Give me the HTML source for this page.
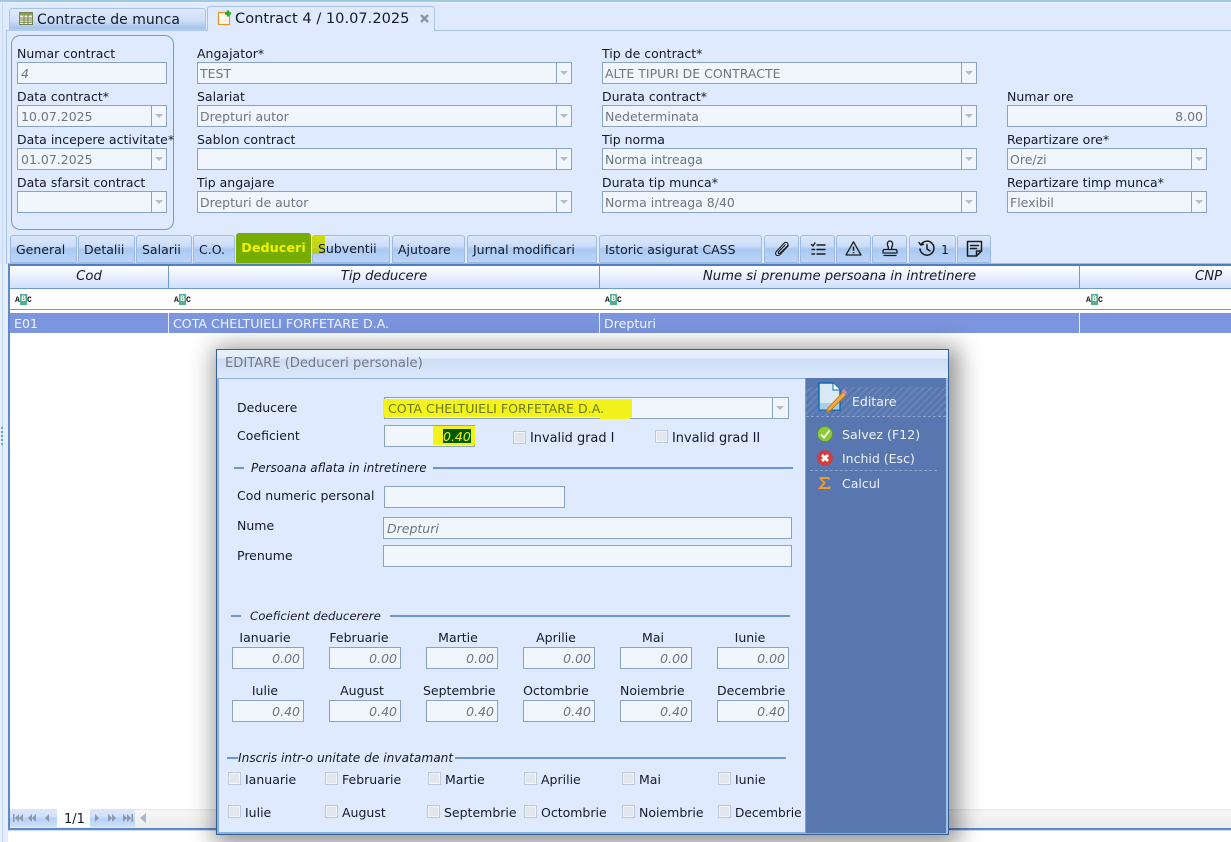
<!DOCTYPE html>
<html>
<head>
<meta charset="utf-8">
<style>
html,body{margin:0;padding:0}
body{width:1231px;height:842px;position:relative;overflow:hidden;background:#fff;font-family:"DejaVu Sans","Liberation Sans",sans-serif;font-size:12.5px;color:#15192a}
div,span,svg{position:absolute;box-sizing:border-box}
.l{white-space:nowrap;line-height:16px;height:16px;margin-top:1px}
.c{white-space:nowrap;line-height:16px;height:16px;text-align:center;margin-top:1px}
.i{background:#f1f5fc;border:1px solid #8aa2c4;height:22px;line-height:22px;padding-left:2px;color:#6e7682;white-space:nowrap;overflow:hidden}
.d{padding-left:3px}
.it{font-style:italic}
.li{font-size:12px}
.r{text-align:right;padding-right:3px;padding-left:0}
.s{width:1px;height:20px;background:#8aa2c4;top:0}
.a{width:0;height:0;border-left:4px solid transparent;border-right:4px solid transparent;border-top:4px solid #b4bcc8;top:8px}
.t{top:235px;height:28px;border:1px solid #9dbbe6;border-radius:3px 3px 0 0;background:linear-gradient(#dce9fb 0,#c9dcf8 40%,#a9c9f2 50%,#bcd4f6 100%);text-align:left;padding-left:5px;line-height:27px;white-space:nowrap;color:#15192a}
.h{top:266px;height:23px;background:linear-gradient(#fff,#cfe0fb);border-bottom:1px solid #6f9bd1;text-align:center;font-style:italic;font-size:13.2px;line-height:22px;white-space:nowrap}
.v{width:1px;background:#6f9bd1}
.line{height:2px;background:#6b96d4}
.m{height:22px;width:72px}
.cb{width:13px;height:13px;border:1px solid #bcc9dc;background:#e3e7ed;box-shadow:inset 0 0 0 1px #f3f5f8}
.abc{top:295px;font:bold 8px/9px "Liberation Mono",monospace;color:#111;width:20px;height:9px}
.abc b{position:absolute;left:4px;top:-1px;width:7px;height:11px;background:#4fae8c;color:#fff;text-align:center;font-weight:bold;line-height:11px}
.abc i{position:absolute;top:1px;font-style:normal;line-height:9px}
.pg{top:809px;height:18px;background:linear-gradient(#dbe8fb 0,#cfe1fb 45%,#b4d0f6 50%,#cfe1fb 100%)}
.p{fill:#8d99a8}
.ic{fill:none;stroke:#1c1c1c;stroke-width:1.6;stroke-linecap:round;stroke-linejoin:round}
</style>
</head>
<body>

<!-- page background -->
<div style="left:0;top:0;width:1231px;height:264px;background:#dfeafe"></div>
<div style="left:0;top:0;width:1231px;height:2px;background:#9fc9e0"></div>
<div style="left:0;top:2px;width:1231px;height:1px;background:#eaf3fd"></div>
<div style="left:0;top:264px;width:8px;height:578px;background:#e5effc"></div>
<div style="left:2px;top:3px;width:1px;height:839px;background:#c5d8f2"></div>
<div style="left:6px;top:30px;width:1px;height:234px;background:#a9c4e6"></div>
<div style="left:6px;top:30px;width:1225px;height:1px;background:#a9c4e6"></div>

<!-- top tabs -->
<div style="left:9px;top:8px;width:197px;height:23px;border:1px solid #a9c4e6;border-bottom:0;border-radius:3px 3px 0 0;background:linear-gradient(#dfeafb 0,#cfe0f8 50%,#a9c6ee 85%,#b4cef2 100%)"></div>
<svg style="left:19px;top:12px" width="15" height="13" viewBox="0 0 15 13"><rect x=".5" y=".5" width="13" height="12" fill="#f3f2dc" stroke="#7a8450"/><rect x="1" y="1" width="12" height="2.5" fill="#8d9a5c"/><path d="M1 6h12M1 8h12M1 10.2h12M5 3.5v9M9 3.5v9" stroke="#7a8450" stroke-width="1"/></svg>
<div class="l" style="left:37px;top:11px;font-size:14px">Contracte de munca</div>
<div style="left:207px;top:6px;width:228px;height:25px;border:1px solid #a9c4e6;border-bottom:0;border-radius:3px 3px 0 0;background:#dfeafe"></div>
<svg style="left:217px;top:10px" width="16" height="16" viewBox="0 0 16 16"><path d="M1.500 2.500h8l3 3v9h-11z" fill="#fff8ea" stroke="#e2962c" stroke-width="1.200"/><path d="M11 .5v6M8 3.500h6" stroke="#2aa52a" stroke-width="2.400"/></svg>
<div class="l" style="left:235px;top:10px;font-size:14.6px">Contract 4 / 10.07.2025</div>
<svg style="left:420px;top:14px" width="9" height="9" viewBox="0 0 9 9"><path d="M1 1l7 7M8 1 1 8" stroke="#8c95a3" stroke-width="2.400"/></svg>

<!-- group box left -->
<div style="left:11px;top:35px;width:163px;height:195px;border:1px solid #6f9bd1;border-radius:9px"></div>

<!-- labels & inputs: col 1 -->
<div class="l" style="left:17px;top:45px">Numar contract</div>
<div class="i it d" style="left:17px;top:62px;width:150px;height:22px">4</div>
<div class="l" style="left:17px;top:88px">Data contract*</div>
<div class="i d" style="left:17px;top:105px;width:150px">10.07.2025<div class="s" style="left:133px"></div><div class="a" style="left:137px"></div></div>
<div class="l" style="left:17px;top:131px">Data incepere activitate*</div>
<div class="i d" style="left:17px;top:148px;width:150px">01.07.2025<div class="s" style="left:133px"></div><div class="a" style="left:137px"></div></div>
<div class="l" style="left:17px;top:174px">Data sfarsit contract</div>
<div class="i d" style="left:17px;top:191px;width:150px"><div class="s" style="left:133px"></div><div class="a" style="left:137px"></div></div>

<!-- col 2 -->
<div class="l" style="left:197px;top:45px">Angajator*</div>
<div class="i" style="left:197px;top:62px;width:375px">TEST<div class="s" style="left:358px"></div><div class="a" style="left:362px"></div></div>
<div class="l" style="left:197px;top:88px">Salariat</div>
<div class="i" style="left:197px;top:105px;width:375px">Drepturi autor<div class="s" style="left:358px"></div><div class="a" style="left:362px"></div></div>
<div class="l" style="left:197px;top:131px">Sablon contract</div>
<div class="i" style="left:197px;top:148px;width:375px"><div class="s" style="left:358px"></div><div class="a" style="left:362px"></div></div>
<div class="l" style="left:197px;top:174px">Tip angajare</div>
<div class="i" style="left:197px;top:191px;width:375px">Drepturi de autor<div class="s" style="left:358px"></div><div class="a" style="left:362px"></div></div>

<!-- col 3 -->
<div class="l" style="left:602px;top:45px">Tip de contract*</div>
<div class="i" style="left:602px;top:62px;width:375px">ALTE TIPURI DE CONTRACTE<div class="s" style="left:358px"></div><div class="a" style="left:362px"></div></div>
<div class="l" style="left:602px;top:88px">Durata contract*</div>
<div class="i" style="left:602px;top:105px;width:375px">Nedeterminata<div class="s" style="left:358px"></div><div class="a" style="left:362px"></div></div>
<div class="l" style="left:602px;top:131px">Tip norma</div>
<div class="i" style="left:602px;top:148px;width:375px">Norma intreaga<div class="s" style="left:358px"></div><div class="a" style="left:362px"></div></div>
<div class="l" style="left:602px;top:174px">Durata tip munca*</div>
<div class="i" style="left:602px;top:191px;width:375px">Norma intreaga 8/40<div class="s" style="left:358px"></div><div class="a" style="left:362px"></div></div>

<!-- col 4 -->
<div class="l" style="left:1007px;top:88px">Numar ore</div>
<div class="i r" style="left:1007px;top:105px;width:200px">8.00</div>
<div class="l" style="left:1007px;top:131px">Repartizare ore*</div>
<div class="i" style="left:1007px;top:148px;width:200px">Ore/zi<div class="s" style="left:183px"></div><div class="a" style="left:187px"></div></div>
<div class="l" style="left:1007px;top:174px">Repartizare timp munca*</div>
<div class="i" style="left:1007px;top:191px;width:200px">Flexibil<div class="s" style="left:183px"></div><div class="a" style="left:187px"></div></div>

<!-- tabs -->
<div class="t" style="left:10px;width:67px">General</div>
<div class="t" style="left:78px;width:57px">Detalii</div>
<div class="t" style="left:136px;width:56px">Salarii</div>
<div class="t" style="left:193px;width:42px">C.O.</div>
<div style="left:236px;top:233px;width:75px;height:31px;background:#76ad00;border-top:1px solid #5b8fc8;border-radius:3px 3px 0 0"></div>
<div style="left:245px;top:264px;width:61px;height:2px;background:#eaf000"></div>
<div class="l" style="left:236px;top:240px;width:75px;text-align:center;font-weight:bold;color:#f2f200;font-size:12.8px">Deduceri</div>
<div class="t" style="left:312px;width:78px"></div>
<div style="left:312px;top:236px;width:13px;height:18px;background:linear-gradient(#d4dc00,#b4cc30)"></div>
<div class="l" style="left:318px;top:240px">Subventii</div>
<div class="t" style="left:392px;width:73px">Ajutoare</div>
<div class="t" style="left:467px;width:130px">Jurnal modificari</div>
<div class="t" style="left:599px;width:163px">Istoric asigurat CASS</div>
<div class="t" style="left:764px;width:35px"></div>
<div class="t" style="left:800px;width:35px"></div>
<div class="t" style="left:836px;width:35px"></div>
<div class="t" style="left:872px;width:35px"></div>
<div class="t" style="left:909px;width:47px"></div>
<div class="t" style="left:957px;width:34px"></div>
<svg style="left:774px;top:241px" width="17" height="17" viewBox="0 0 16 16"><path class="ic" style="stroke-width:1" d="M13.500 4.500 6 12.500c-1.200 1.300-3.200 1.500-4 .6s-.6-2.400.6-3.700l6.800-7.200c1-1 2.300-1.200 3.200-.4s.7 2.100-.2 3.100L6 11.200c-.6.6-1.300.7-1.700.3s-.3-1.100.3-1.700l6-6.300"/></svg>
<svg style="left:810px;top:241px" width="16" height="16" viewBox="0 0 16 16"><path class="ic" style="stroke-width:1.400" d="M1.500 3.500 3 5l2-3M7 4h8M7 8.500h8M7 13h8M2 8.500h2.500M2 13h2.500"/></svg>
<svg style="left:845px;top:240px" width="17" height="17" viewBox="0 0 17 17"><path class="ic" style="stroke-width:1.300" d="M8.500 1.800 16 15H1z"/><path d="M8.500 6.500v4.300M8.500 12v1.300" stroke="#1c1c1c" stroke-width="1.500" fill="none"/></svg>
<svg style="left:882px;top:240px" width="16" height="17" viewBox="0 0 16 17"><path class="ic" style="stroke-width:1.300" d="M6.300 9V7C4.500 4.500 5.500 1 8 1s3.500 3.500 1.700 6v2M2.500 9.500h11c1 0 1.500.8 1.500 1.800v1.700H1v-1.700c0-1 .5-1.800 1.500-1.800zM2 15.500h12"/></svg>
<svg style="left:918px;top:240px" width="17" height="17" viewBox="0 0 17 17"><path class="ic" style="stroke-width:1.500" d="M3 4.500A7 7 0 1 1 2 9M1 2.500 2.700 5l2.800-.7M9 4.500V9l3 2"/></svg>
<div class="l" style="left:941px;top:241px">1</div>
<svg style="left:966px;top:240px" width="17" height="17" viewBox="0 0 17 17"><path class="ic" style="stroke-width:1.500" d="M1.500 1.500h14v9.500l-5 5h-9zM10.500 16v-5h5M4.500 5.500h8M4.500 8.500h6"/></svg>

<!-- grid -->
<div style="left:8px;top:263px;width:1223px;height:1px;background:#9dbbe6"></div>
<div style="left:8px;top:264px;width:1223px;height:2px;background:#4f7fbe"></div>
<div style="left:8px;top:264px;width:2px;height:566px;background:#5f8ac6"></div>
<div class="h" style="left:10px;width:158px">Cod</div>
<div class="h" style="left:169px;width:430px">Tip deducere</div>
<div class="h" style="left:600px;width:479px">Nume si prenume persoana in intretinere</div>
<div class="h" style="left:1080px;width:151px;text-align:left"><span style="position:absolute;left:115px">CNP</span></div>
<div class="v" style="left:168px;top:266px;height:23px"></div>
<div class="v" style="left:599px;top:266px;height:23px"></div>
<div class="v" style="left:1079px;top:266px;height:23px"></div>
<div style="left:10px;top:309px;width:1221px;height:1px;background:#6f9bd1"></div>
<div class="abc" style="left:16px"><i style="left:-1px">A</i><b>B</b><i style="left:11px">C</i></div>
<div class="abc" style="left:175px"><i style="left:-1px">A</i><b>B</b><i style="left:11px">C</i></div>
<div class="abc" style="left:606px"><i style="left:-1px">A</i><b>B</b><i style="left:11px">C</i></div>
<div class="abc" style="left:1087px"><i style="left:-1px">A</i><b>B</b><i style="left:11px">C</i></div>
<div style="left:10px;top:313px;width:1221px;height:20px;background:#7b95de"></div>
<div class="v" style="left:168px;top:313px;height:20px;background:#e8eefb"></div>
<div class="v" style="left:599px;top:313px;height:20px;background:#e8eefb"></div>
<div class="v" style="left:1079px;top:313px;height:20px;background:#e8eefb"></div>
<div class="l" style="left:14px;top:315px;color:#f3f6fd;font-size:12.6px">E01</div>
<div class="l" style="left:173px;top:315px;color:#f3f6fd;font-size:12.6px">COTA CHELTUIELI FORFETARE D.A.</div>
<div class="l" style="left:604px;top:315px;color:#f3f6fd;font-size:12.6px">Drepturi</div>

<!-- splitter dots -->
<div style="left:1px;top:427px;width:2px;height:2px;background:#6f9bd1"></div>
<div style="left:1px;top:431px;width:2px;height:2px;background:#6f9bd1"></div>
<div style="left:1px;top:435px;width:2px;height:2px;background:#6f9bd1"></div>
<div style="left:1px;top:439px;width:2px;height:2px;background:#6f9bd1"></div>
<div style="left:1px;top:443px;width:2px;height:2px;background:#6f9bd1"></div>

<!-- bottom pager -->
<div style="left:10px;top:809px;width:1221px;height:19px;background:linear-gradient(#e6e6e6 0,#f6f6f6 2px,#ededed 100%)"></div>
<div style="left:8px;top:828px;width:1223px;height:2px;background:#5f8ac6"></div>
<div style="left:8px;top:830px;width:1223px;height:1px;background:#cfe0f6"></div>
<div class="pg" style="left:10px;width:47px"></div>
<div style="left:57px;top:809px;width:33px;height:18px;background:#fff"></div>
<div class="pg" style="left:90px;width:45px"></div>
<div class="l" style="left:64px;top:811px;font-size:13px">1/1</div>
<svg style="left:12px;top:812px" width="42" height="12" viewBox="0 0 42 12"><path class="p" d="M1 2h1.500v8H1zM7 2v8L3 6zM11 2v8L7 6zM20 2v8l-4-4zM24 2v8l-4-4zM37 2v8l-4-4z"/></svg>
<svg style="left:94px;top:812px" width="40" height="12" viewBox="0 0 40 12"><path class="p" d="M1 2v8l4-4zM14 2v8l4-4zM18 2v8l4-4zM29 2v8l4-4zM33 2v8l4-4zM37.500 2H39v8h-1.500z"/></svg>
<svg style="left:139px;top:811px" width="8" height="14" viewBox="0 0 8 14"><path d="M7 2v10L1 7z" fill="#a9b8cc"/></svg>

<!-- modal -->
<div style="left:216px;top:349px;width:733px;height:486px;background:#dfeafe;border:1px solid #345f95;box-shadow:4px 4px 22px 6px rgba(0,0,0,.42)"></div>
<div style="left:217px;top:350px;width:731px;height:28px;background:linear-gradient(#e8f0fc 0,#e2ecfb 30%,#cbdcf5 32%,#dce8fb 100%)"></div>
<div class="l" style="left:225px;top:355px;color:#6f7888;font-size:13.1px">EDITARE (Deduceri personale)</div>
<div style="left:217px;top:378px;width:731px;height:1px;background:#8eb2e0"></div>
<div style="left:217px;top:378px;width:2px;height:456px;background:#8eb2e0"></div>
<div style="left:217px;top:832px;width:731px;height:2px;background:#8eb2e0"></div>

<!-- sidebar -->
<div style="left:805px;top:378px;width:141px;height:455px;background:#5877b0;border-left:1px solid #7f9fcf"></div>
<div style="left:946px;top:378px;width:2px;height:455px;background:#9fc0e8"></div>
<div style="left:806px;top:387px;width:140px;height:29px;background:repeating-linear-gradient(135deg,#5877b0 0,#5877b0 3px,#6683b8 3px,#6683b8 5px)"></div>
<div style="left:806px;top:416px;width:140px;height:0;border-top:1px dashed #8aa3cc"></div>
<svg style="left:817px;top:381px" width="30" height="33" viewBox="0 0 30 33"><path d="M2 2h14l7 7v20H2z" fill="#d8eaf5" stroke="#0f6cad" stroke-width="1.500"/><rect x="3" y="22" width="19" height="6.500" fill="#a9cfe8"/><path d="M16 2v7h7" fill="#fff" stroke="#0f6cad" stroke-width="1"/><path d="M11 27 26 11l3 3-15 15-5 2z" fill="#f3a93a" stroke="#b4701e" stroke-width=".8"/><path d="M25 10l2-2 3 3-2 3z" fill="#c98ac0"/></svg>
<div class="l" style="left:852px;top:393px;color:#f0f4fb;font-size:12.5px">Editare</div>
<svg style="left:817px;top:426px" width="16" height="16" viewBox="0 0 16 16"><circle cx="8" cy="8" r="7.500" fill="#8cc63a" stroke="#5f9420" stroke-width=".7"/><path d="M4 8.500 7 11.500 12.500 4.500" fill="none" stroke="#f0f6e4" stroke-width="2"/></svg>
<div class="l" style="left:842px;top:426px;color:#eef2fa;font-size:12.6px">Salvez (F12)</div>
<svg style="left:817px;top:450px" width="16" height="16" viewBox="0 0 16 16"><circle cx="8" cy="8" r="7.800" fill="#d23c3c"/><path d="M5 5l6 6M11 5l-6 6" stroke="#fff" stroke-width="2.800"/></svg>
<div class="l" style="left:842px;top:450px;color:#eef2fa">Inchid (Esc)</div>
<div style="left:810px;top:470px;width:127px;height:0;border-top:1px dashed #8aa3cc"></div>
<svg style="left:818px;top:476px" width="13" height="14" viewBox="0 0 13 14"><path d="M1.500 2h9.500M11 2v1.500M2 2l4.500 5L2 12h9.500v-1.500" fill="none" stroke="#f09a28" stroke-width="2"/></svg>
<div class="l" style="left:842px;top:475px;color:#eef2fa">Calcul</div>

<!-- form in modal -->
<div class="l" style="left:237px;top:399px">Deducere</div>
<div class="i" style="left:384px;top:397px;width:405px"><div class="s" style="left:387px"></div><div class="a" style="left:391px"></div></div>
<div style="left:383px;top:399px;width:249px;height:18px;background:#f2f21c"></div>
<div style="left:600px;top:416px;width:30px;height:3px;background:#f2f21c"></div>
<div class="l" style="left:388px;top:400px;color:#6b7a20;font-size:12.6px">COTA CHELTUIELI FORFETARE D.A.</div>
<div class="l" style="left:237px;top:427px">Coeficient</div>
<div class="i" style="left:384px;top:425px;width:91px"></div>
<div style="left:433px;top:426px;width:42px;height:19px;background:#f2f21c"></div>
<div style="left:443px;top:429px;width:28px;height:14px;background:#005a00"></div>
<div class="l it" style="left:443px;top:428px;color:#f2f21c">0.40</div>
<div class="cb" style="left:513px;top:431px"></div>
<div class="l" style="left:530px;top:430px;font-size:12.9px">Invalid grad I</div>
<div class="cb" style="left:655px;top:430px"></div>
<div class="l" style="left:672px;top:430px;font-size:12.9px">Invalid grad II</div>

<div class="line" style="left:234px;top:467px;width:10px"></div>
<div class="l it li" style="left:251px;top:459px">Persoana aflata in intretinere</div>
<div class="line" style="left:433px;top:467px;width:360px"></div>
<div class="l" style="left:237px;top:487px">Cod numeric personal</div>
<div class="i" style="left:384px;top:486px;width:181px"></div>
<div class="l" style="left:237px;top:517px">Nume</div>
<div class="i it d" style="left:383px;top:517px;width:409px">Drepturi</div>
<div class="l" style="left:237px;top:547px">Prenume</div>
<div class="i" style="left:383px;top:545px;width:409px"></div>

<div class="line" style="left:231px;top:615px;width:10px"></div>
<div class="l it li" style="left:250px;top:607px;font-size:11.8px">Coeficient deducerere</div>
<div class="line" style="left:390px;top:615px;width:400px"></div>

<div class="c" style="left:232px;top:629px;width:66px">Ianuarie</div>
<div class="c" style="left:329px;top:629px;width:60px">Februarie</div>
<div class="c" style="left:426px;top:629px;width:64px">Martie</div>
<div class="c" style="left:523px;top:629px;width:66px">Aprilie</div>
<div class="c" style="left:620px;top:629px;width:66px">Mai</div>
<div class="c" style="left:717px;top:629px;width:66px">Iunie</div>
<div class="i it r m" style="left:232px;top:647px">0.00</div>
<div class="i it r m" style="left:329px;top:647px">0.00</div>
<div class="i it r m" style="left:426px;top:647px">0.00</div>
<div class="i it r m" style="left:523px;top:647px">0.00</div>
<div class="i it r m" style="left:620px;top:647px">0.00</div>
<div class="i it r m" style="left:717px;top:647px">0.00</div>

<div class="c" style="left:232px;top:682px;width:66px">Iulie</div>
<div class="c" style="left:329px;top:682px;width:66px">August</div>
<div class="c" style="left:423px;top:682px;width:72px">Septembrie</div>
<div class="c" style="left:523px;top:682px;width:66px">Octombrie</div>
<div class="c" style="left:620px;top:682px;width:64px">Noiembrie</div>
<div class="c" style="left:717px;top:682px;width:66px">Decembrie</div>
<div class="i it r m" style="left:232px;top:700px">0.40</div>
<div class="i it r m" style="left:329px;top:700px">0.40</div>
<div class="i it r m" style="left:426px;top:700px">0.40</div>
<div class="i it r m" style="left:523px;top:700px">0.40</div>
<div class="i it r m" style="left:620px;top:700px">0.40</div>
<div class="i it r m" style="left:717px;top:700px">0.40</div>

<div class="line" style="left:227px;top:757px;width:11px"></div>
<div class="l it li" style="left:238px;top:749px;font-size:12.2px">Inscris intr-o unitate de invatamant</div>
<div class="line" style="left:455px;top:757px;width:331px"></div>

<div class="cb" style="left:228px;top:772px"></div><div class="l" style="left:245px;top:771px">Ianuarie</div>
<div class="cb" style="left:325px;top:772px"></div><div class="l" style="left:342px;top:771px">Februarie</div>
<div class="cb" style="left:428px;top:772px"></div><div class="l" style="left:445px;top:771px">Martie</div>
<div class="cb" style="left:524px;top:772px"></div><div class="l" style="left:541px;top:771px">Aprilie</div>
<div class="cb" style="left:622px;top:772px"></div><div class="l" style="left:639px;top:771px">Mai</div>
<div class="cb" style="left:718px;top:772px"></div><div class="l" style="left:735px;top:771px">Iunie</div>

<div class="cb" style="left:228px;top:805px"></div><div class="l" style="left:245px;top:804px">Iulie</div>
<div class="cb" style="left:325px;top:805px"></div><div class="l" style="left:342px;top:804px">August</div>
<div class="cb" style="left:427px;top:805px"></div><div class="l" style="left:444px;top:804px">Septembrie</div>
<div class="cb" style="left:524px;top:805px"></div><div class="l" style="left:541px;top:804px">Octombrie</div>
<div class="cb" style="left:622px;top:805px"></div><div class="l" style="left:639px;top:804px">Noiembrie</div>
<div class="cb" style="left:718px;top:805px"></div><div class="l" style="left:735px;top:804px;font-size:12.2px">Decembrie</div>

</body>
</html>
